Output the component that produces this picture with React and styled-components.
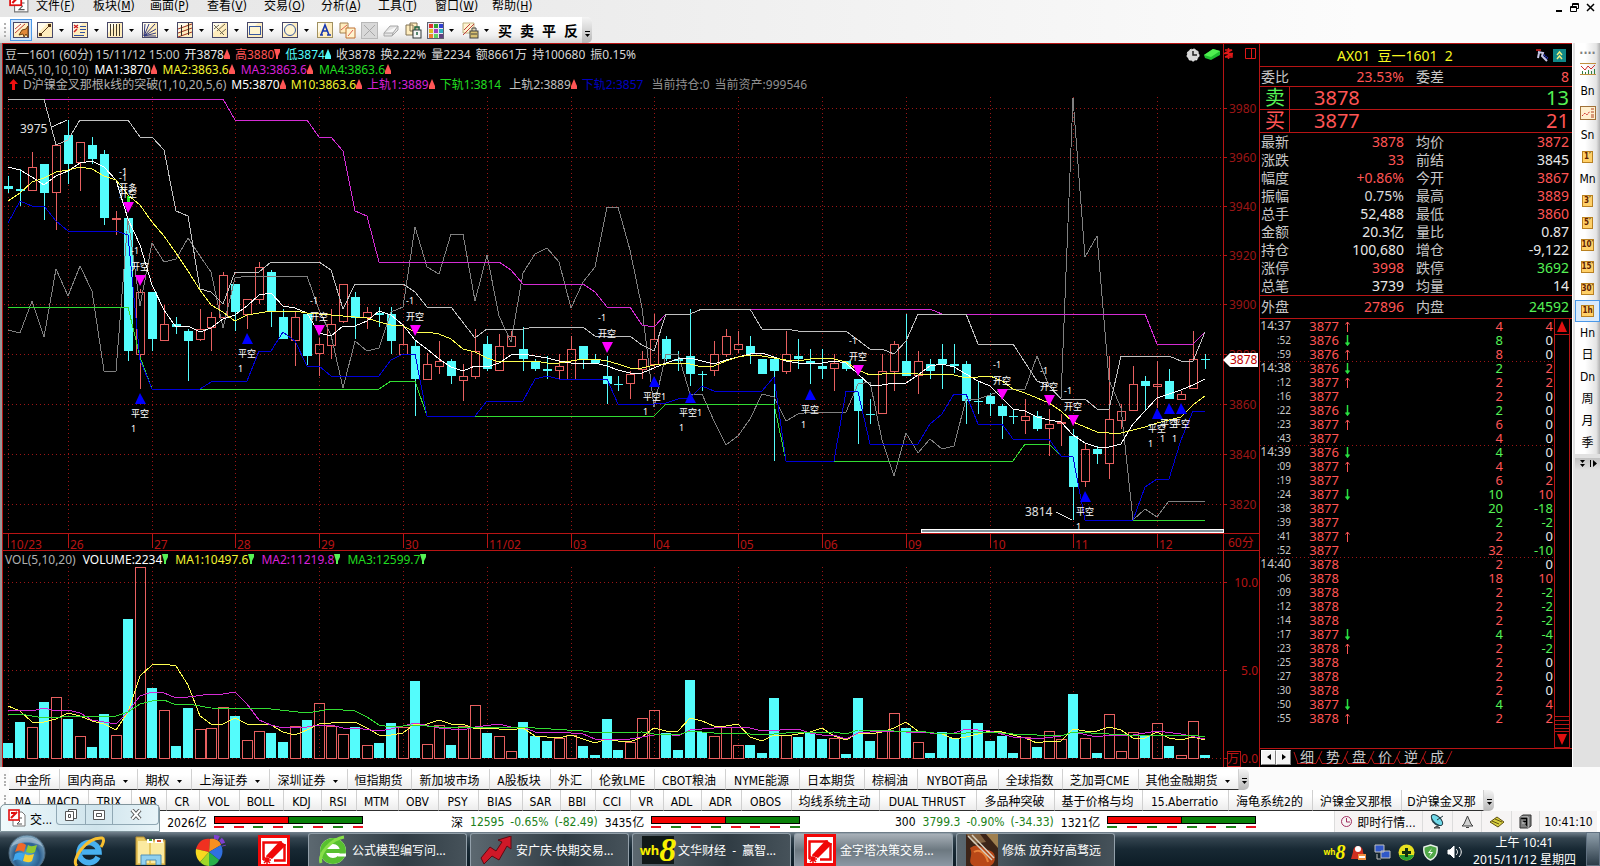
import styled, { createGlobalStyle } from 'styled-components';

const red = '#ff5555';
const green = '#55f255';
const cyan = '#54fcfc';
const silver = '#c8c8c8';
const line = '#b81414';
const dim = '#9c1616';

const uiFont = `"Noto Sans", "Noto Sans CJK SC", sans-serif`;
const barFont = `"DejaVu Sans Condensed", "Noto Sans CJK SC", sans-serif`;

// ---------- data ----------

// kind, high, top, bottom, low, top of the volume bar
const candles = `
c 176 186 189 193 743|c 169 189 191 206 722|r 152 167 190 190 727|c 164 164 193 220 702|r 145 145 192 230 697
c 120 135 164 184 719|r 142 142 162 191 736|c 137 145 159 164 747|c 150 154 218 225 714|r 211 218 219 235 735
c 218 218 351 361 619|r 289 292 354 389 567|c 292 292 339 351 688|r 305 324 340 340 710|c 317 324 327 334 746
c 329 331 341 381 708|r 309 329 339 341 729|r 312 317 327 351 728|r 272 275 317 317 707|c 284 284 312 331 716
r 299 299 314 329 740|r 262 267 299 304 731|c 270 272 311 327 733|c 309 317 339 339 742|r 311 317 340 366 726
c 314 314 356 365 720|r 338 344 353 376 703|r 309 324 345 359 726|r 284 284 321 323 734|c 292 297 318 339 727
r 307 312 317 329 745|c 307 313 315 327 743|c 307 314 341 354 723|r 324 344 354 354 727|c 340 346 379 416 681
r 353 364 379 379 744|r 341 361 366 374 725|c 359 361 376 384 745|r 364 376 380 401 726|r 329 351 376 379 705
c 336 344 369 371 733|r 334 346 370 370 736|r 331 336 346 346 751|c 327 349 359 371 722|c 359 361 369 371 736
c 356 369 371 379 741|r 354 366 370 379 738|r 336 349 379 379 735|c 346 346 359 369 746|c 354 359 363 363 755
c 356 376 384 404 719|c 376 384 385 391 750|r 371 374 383 399 742|r 351 359 369 379 718|r 314 339 364 367 710
c 336 339 359 361 733|c 351 359 361 371 750|c 309 356 374 386 680|c 371 374 375 391 732|r 341 354 370 376 736
r 329 336 354 357 727|r 331 344 349 353 745|c 336 346 354 364 745|c 359 359 374 374 753|c 359 359 371 461 698
r 331 354 371 374 735|c 339 356 359 369 737|c 349 361 364 384 733|c 349 366 369 379 739|r 354 363 368 391 738
c 361 361 369 371 754|c 379 379 411 444 698|c 399 414 415 424 741|r 354 371 413 413 731|r 341 344 371 391 713
c 314 361 376 376 728|r 351 361 375 394 742|c 359 364 371 379 753|c 344 359 364 389 732|c 344 364 366 373 738
c 361 364 401 424 720|c 381 401 402 414 723|c 393 396 404 416 741|c 404 406 416 439 736|c 409 416 417 424 753
r 399 416 420 434 737|c 411 416 429 431 747|r 409 424 428 456 731|r 414 422 423 446 739|c 429 436 487 520 694
r 444 449 481 487 738|c 446 449 454 464 753|r 356 419 463 479 714|r 404 411 420 429 751|r 366 384 410 410 732
c 376 381 386 411 736|r 361 384 386 408 723|c 369 381 399 399 746|r 391 394 399 399 755|r 331 359 388 388 721
c 354 359 360 369 755`.trim().split(/[\n|]/).map(row => {
    const [kind, ...n] = row.split(' ');
    const [high, top, bottom, low, vol] = n.map(Number);
    return { kind, high, top, bottom, low, vol };
});

const barX = i => Math.round(8 + 11.97 * i);

// one value for each bar
const every = text => text.split(' ').map((y, i) => `${barX(i)},${y}`).join(' ');
// "bar:y" pairs
const pairs = text => text.split(' ').map(p => {
    const [i, y] = p.split(':');
    return `${barX(Number(i))},${y}`;
}).join(' ');

const priceLines = [
    { color: '#808080', points: pairs('0:330 1:333 2:301 3:337 4:269 5:296 6:266 7:291 8:371 9:371 10:218 11:306 12:243 13:262 14:259 15:238 16:256 17:272 18:328 19:278 20:276 25:276 26:310 27:335 28:388 29:341 30:351 31:348 32:312 33:307 34:227 35:267 36:274 37:234 38:234 39:301 40:255 41:316 42:342 43:273 44:254 45:248 46:262 47:308 48:282 49:267 50:207 51:207 52:250 53:308 54:407 55:354 56:354 57:394 58:394 59:421 60:445 61:436 62:419 63:394 64:397 65:421 66:414 67:412 70:412 71:384 72:382 73:440 74:476 75:433 76:453 77:439 78:449 79:446 80:399 81:399 82:395 83:390 84:389 85:389 86:356 87:386 88:398 89:98 90:257 91:236 92:380 93:408 94:520 95:509 96:517 97:501 100:501') },
    { color: '#32dc32', points: pairs('0:307 10:307 11:357 12:389 31:389 32:381 34:381 35:416 54:416 55:404 64:404 65:461 84:461 85:444 87:444 88:456 89:457 90:520 100:520') },
    { color: '#0000d8', points: pairs('0:223 1:201 2:206 3:206 4:221 5:231 9:231 10:235 11:360 12:389 16:389 17:382 20:381 21:351 22:351 23:332 24:341 25:366 26:366 27:376 31:376 32:360 33:354 34:354 35:416 39:416 40:401 43:401 44:379 45:376 46:379 50:379 51:404 54:404 55:403 56:399 57:398 58:386 59:391 63:391 64:377 65:461 69:461 70:391 71:392 72:444 76:444 77:424 78:414 79:394 80:394 81:424 83:424 84:439 87:439 88:456 89:457 90:520 94:520 95:487 96:479 97:479 98:440 99:411 100:411') },
    { color: '#d42cd4', points: pairs('3:99 18:99 19:120 25:120 26:137 27:137 28:151 29:211 30:216 31:262 41:262 42:270 43:284 48:284 49:292 50:307 52:307 53:325 54:327 55:314 57:314 58:309 77:309 78:314 95:314 96:344 99:344 100:332') },
    { color: '#c0c0c0', points: pairs('0:99 3:99 4:145 5:140 6:120 10:120 11:137 12:137 13:150 14:211 15:216 16:289 17:292 18:304 19:272 21:272 22:262 26:262 27:270 28:309 29:284 33:284 34:292 35:307 37:307 39:338 40:329 43:329 44:327 48:327 49:336 52:336 53:345 54:351 55:314 57:314 58:309 62:309 63:329 65:329 66:331 70:331 71:340 72:349 73:349 74:354 75:341 76:314 80:314 81:344 84:344 86:381 87:386 88:399 90:399 91:409 92:409 93:356 97:356 98:361 99:361 100:332') },
    { color: '#ffffff', points: every('167 170 177 185 176 171 163 161 167 180 219 245 285 310 327 326 332 328 319 315 306 295 293 306 308 313 333 336 326 326 321 311 315 325 340 349 359 367 371 366 367 363 355 354 356 358 361 363 363 363 366 370 373 373 368 363 359 358 361 364 360 357 354 353 357 361 363 364 363 361 363 374 385 385 383 383 375 366 364 367 374 381 386 398 409 411 417 420 422 435 443 447 447 444 424 411 398 394 390 385 379') },
    { color: '#ffff50', points: every('201 193 182 178 172 170 167 169 176 180 195 205 222 236 253 271 290 305 312 321 315 313 311 311 311 313 314 315 316 317 318 322 325 326 332 332 334 339 349 352 358 362 361 361 361 363 363 361 359 359 361 364 368 368 365 364 363 364 367 366 361 357 355 356 358 360 361 359 358 359 362 370 375 374 373 373 374 375 374 375 378 377 376 381 389 393 398 403 411 422 427 432 433 433 430 427 423 420 417 405 396') },
];

const volumeLines = [
    { color: '#ffff50', points: every('706 711 722 722 719 713 716 721 724 730 712 676 665 664 666 685 716 724 724 718 724 724 725 732 735 730 724 723 722 722 728 735 735 733 724 724 720 724 724 729 728 729 730 728 736 737 738 735 739 743 739 741 742 737 728 731 731 718 721 726 726 724 737 741 735 736 734 732 728 736 740 733 734 732 728 722 731 733 734 739 737 734 731 732 735 738 743 741 741 729 731 731 727 730 738 738 732 738 740 737 740') },
    { color: '#d42cd4', points: pairs('0:710 2:711 3:708 4:711 5:710 6:713 7:720 8:722 9:724 10:712 11:696 12:692 13:693 14:698 15:697 17:694 18:694 19:692 20:704 21:720 22:725 23:728 24:727 25:727 26:725 27:725 28:728 29:728 31:731 32:729 34:723 36:728 38:730 39:727 41:724 42:727 43:727 44:732 47:733 48:734 49:739 52:739 54:735 55:734 56:736 57:730 59:728 61:727 62:728 63:731 66:729 67:733 68:735 69:735 70:739 71:733 73:731 75:732 77:733 79:733 80:729 82:731 84:737 86:739 88:736 89:732 91:737 92:735 94:735 96:731 98:734 100:739') },
    { color: '#32dc32', points: pairs('0:715 1:714 3:718 6:716 9:716 10:712 11:704 12:701 13:700 14:705 15:704 17:708 22:709 25:713 27:709 29:711 30:717 31:725 32:727 34:725 36:727 40:727 44:728 48:731 49:733 53:732 54:734 56:735 57:731 59:733 61:733 63:735 65:733 69:732 70:734 71:730 74:731 76:731 78:734 82:732 84:734 88:736 89:732 92:734 95:736 97:735 99:735 100:737') },
];

const days = [[0, '10/23'], [5, '26'], [12, '27'], [19, '28'], [26, '29'], [33, '30'], [40, '11/02'], [47, '03'],
    [54, '04'], [61, '05'], [68, '06'], [75, '09'], [82, '10'], [89, '11'], [96, '12']];
const prices = [[3980, 108], [3960, 157], [3940, 206], [3920, 255], [3900, 304], [3880, 354], [3860, 404], [3840, 454], [3820, 504]];
const sells = [[10, 202], [11, 275], [26, 325], [34, 325], [50, 342], [71, 365], [83, 389], [87, 395], [89, 415]];
const buys = [[11, 393], [20, 333], [54, 376, '平空1'], [57, 392, '平空1'], [67, 389], [90, 491], [96, 408], [97, 403], [98, 403]];

const quotes = [
    ['最新', '3878', red, '均价', '3872', red],
    ['涨跌', '33', red, '前结', '3845', '#e8e8e8'],
    ['幅度', '+0.86%', red, '今开', '3867', red],
    ['振幅', '0.75%', '#d8d8d8', '最高', '3889', red],
    ['总手', '52,488', '#e8e8e8', '最低', '3860', red],
    ['金额', '20.3亿', '#e8e8e8', '量比', '0.87', '#e8e8e8'],
    ['持仓', '100,680', '#e8e8e8', '增仓', '-9,122', '#e8e8e8'],
    ['涨停', '3998', red, '跌停', '3692', green],
    ['总笔', '3739', '#e8e8e8', '均量', '14', '#e8e8e8'],
];

// time, price, arrow, volume, volume side, change
const ticks = `14:37 3877 u 4 r 4|:52 3876 d 8 g 0|:59 3876 u 8 r 0|14:38 3876 d 2 g 2|:12 3877 u 2 r 2
:16 3877 - 2 r 0|:22 3876 d 2 g 0|:23 3877 u 6 r 0|:43 3877 - 4 r 0|14:39 3876 d 4 g 0
:09 3877 u 4 r 0|:19 3877 - 6 r 2|:24 3877 d 10 g 10|:38 3877 - 20 g -18|:39 3877 - 2 g -2
:41 3877 u 2 r 0|:52 3877 - 32 r -10|14:40 3878 - 2 r 0|:06 3878 - 18 r 10|:09 3878 - 2 r -2
:12 3878 - 2 r -2|:14 3878 - 2 r -2|:17 3877 d 4 g -4|:23 3878 u 2 r -2|:25 3878 - 2 r 0
:27 3878 - 2 r 0|:30 3878 - 2 r 0|:50 3877 d 4 g 4|:55 3878 u 2 r 2`.split(/[\n|]/).map(t => t.split(' '));

const menus = [['文件', 'F'], ['板块', 'M'], ['画面', 'P'], ['查看', 'V'], ['交易', 'O'], ['分析', 'A'], ['工具', 'T'], ['窗口', 'W'], ['帮助', 'H']];

const markets = [['中金所', 51], ['国内商品', 78, true], ['期权', 54, true], ['上海证券', 78, true], ['深圳证券', 78, true],
    ['恒指期货', 64], ['新加坡市场', 78], ['A股板块', 61], ['外汇', 41], ['伦敦LME', 63], ['CBOT粮油', 71], ['NYME能源', 74],
    ['日本期货', 65], ['棕榈油', 53], ['NYBOT商品', 81], ['全球指数', 64], ['芝加哥CME', 76], ['其他金融期货', 100, true]];
const indicators = [['MA', 31], ['MACD', 49], ['TRIX', 43], ['WR', 35], ['CR', 33], ['VOL', 40], ['BOLL', 44], ['KDJ', 38],
    ['RSI', 35], ['MTM', 42], ['OBV', 40], ['PSY', 40], ['BIAS', 44], ['SAR', 38], ['BBI', 35], ['CCI', 35], ['VR', 33],
    ['ADL', 38], ['ADR', 40], ['OBOS', 50], ['均线系统主动', 88], ['DUAL THRUST', 97], ['多品种突破', 78],
    ['基于价格与均', 88], ['15.Aberratio', 86], ['海龟系统2的', 84], ['沪镍金叉那根', 89], ['D沪镍金叉那', 82]];

// ---------- small drawings ----------

const Mark = ({ up, color = red }) => (
    <svg width="6" height="11" viewBox="0 0 6 11">
        <path d={up ? 'M3 0L6 7V10H0V7Z' : 'M0 0H6V3L4 7V10H2V7Z'} fill={color} />
    </svg>
);

const Logo = ({ size }) => (
    <svg width={size} height={size} viewBox="0 0 32 32">
        <rect width="32" height="32" fill="#f00808" />
        <rect x="3" y="3" width="26" height="26" fill="#fff" />
        <path d="M5.500 25V7.500H24" fill="none" stroke="#f00808" strokeWidth="2.500" />
        <path d="M26.500 9V25.500H16" fill="none" stroke="#f00808" strokeWidth="2.500" />
        <path d="M8 21L22 6L28 10L14 24Z" fill="#f00808" />
        <path d="M6 22L12 28M12 22L6 28M9 21V29M5 25H13" stroke="#f00808" strokeWidth="1.5" />
    </svg>
);

const Page = ({ size = 18 }) => (
    <svg width={size} height={size} viewBox="0 0 18 18">
        <path d="M5 3H14L17 6V17H5Z" fill="#fff" stroke="#777" />
        <path d="M9 9H14M9 9L12 12L9 15H14" fill="none" stroke="#555" />
        <rect x="1" y="1" width="10" height="10" fill="#fff" stroke="#e01010" strokeWidth="1.6" />
        <path d="M3 9L9 3M3 4H7" stroke="#e01010" strokeWidth="2" />
    </svg>
);

const Tile = ({ edge = '#484868', children }) => (
    <svg width="16" height="16" viewBox="0 0 16 16" fill="none" stroke="#604020">
        <rect x="0.5" y="0.5" width="15" height="15" fill="#ffedbe" stroke={edge} />
        <path d="M1 1H11L1 11Z" fill="#fffbea" stroke="none" />
        {children}
    </svg>
);

const SmallIcon = ({ children }) => (
    <svg width="17" height="17" viewBox="0 0 17 17" fill="none">{children}</svg>
);

const tools = [
    { label: '画线', active: true, icon: <Tile><path d="M2 7L8 2M2 11L12 2" stroke="#c04040" /><path d="M6 13L9 8L13 7L15 4L15 15L13 12L11 15L10 12Z" fill="#e08838" stroke="#704010" /></Tile> },
    { label: '线段', drop: true, icon: <Tile><path d="M4 12L12 4" /><path d="M2 11H5V14H2ZM11 2H14V5H11Z" fill="#503010" stroke="none" /></Tile> },
    { label: '文字线', drop: true, icon: <Tile><path d="M8 4.5H14M8 7.5H14M8 10.5H13M2 13.5H12" stroke="#3050a0" /><path d="M2 3L6 6M6 3L2 6M2 10L5 7" stroke="#d02020" strokeWidth="1.5" /></Tile> },
    { label: '周期线', drop: true, icon: <Tile><path d="M3.5 2V14M6.5 2V14M9.5 2V14M12.5 2V14" stroke="#403828" /></Tile> },
    { label: '扇形线', drop: true, icon: <Tile><path d="M2 14L3 2M2 14L7 2M2 14L13 2M2 14L14 7M2 14L14 11M2 14H14" stroke="#303880" /></Tile> },
    { label: '通道线', drop: true, icon: <Tile><path d="M1 7L15 2M1 11L15 6M1 15L15 10" stroke="#a03020" /><path d="M4.5 3V14M11.5 1V13" stroke="#302820" /></Tile> },
    { label: '平行线', drop: true, icon: <Tile><path d="M2 3L12 13M5 9L13 2M8 12L14 7M2 7L7 3" stroke="#706850" /></Tile> },
    { label: '矩形', drop: true, icon: <Tile><rect x="2.5" y="4.5" width="11" height="8" stroke="#3858a0" fill="#fff4d0" /></Tile> },
    { label: '圆形', drop: true, icon: <Tile><circle cx="8" cy="8" r="5.5" stroke="#3858a0" fill="#fff4d0" /></Tile> },
    { label: '文字', icon: <Tile edge="#a09060"><path d="M4 13L8 3L12 13M6 9H11M3 13H6M10 13H14" stroke="#1838b0" strokeWidth="1.6" /></Tile> },
    { label: '复制', icon: <SmallIcon><path d="M1 1H9V11H1Z" fill="#ffedbe" stroke="#a08050" /><path d="M7 6H16V16H7Z" fill="#fff4d0" stroke="#c07030" /><path d="M2 8L8 3M9 14L14 8" stroke="#e06050" /></SmallIcon> },
    { label: '删除', icon: <SmallIcon><rect x="0.5" y="0.5" width="16" height="16" fill="#d8d8d8" stroke="#b8b8b8" /><path d="M3 3L14 14M14 3L3 14" stroke="#a8a8a8" /></SmallIcon> },
    { label: '橡皮', icon: <SmallIcon><path d="M1 11L7 4H15L10 11ZM1 11V14H9L15 8V4M10 11L9 14" fill="#e4e4e4" stroke="#a8a8a8" /></SmallIcon> },
    { label: '锁定', icon: <SmallIcon><path d="M1 3H8V13H1ZM5 1H12V9H5Z" fill="#ffedbe" stroke="#807050" /><rect x="8" y="8" width="8" height="8" fill="#f4f4f4" stroke="#303838" /><path d="M10 8V5H14V8M12 10V13" stroke="#206040" strokeWidth="1.5" /></SmallIcon> },
    { label: '颜色', drop: true, icon: <SmallIcon><rect x="0.5" y="0.5" width="16" height="16" fill="#e8e8f0" stroke="#606070" />
        {['#e03030', '#30a030', '#3040d0', '#e0c020', '#a040c0', '#30b0c0', '#f08030', '#60d060', '#604080'].map((c, i) => (
            <rect key={c} x={2 + (i % 3) * 5} y={2 + Math.floor(i / 3) * 5} width="4" height="4" fill={c} />))}</SmallIcon> },
    { label: '锁线', drop: true, icon: <SmallIcon><path d="M1 1H12V11H1Z" fill="#fff4d0" stroke="#c0b080" /><path d="M1 13L12 2M2 8L8 2" stroke="#c04040" /><rect x="8" y="9" width="8" height="7" fill="#d8c070" stroke="#404040" /><path d="M10 9V6H14V9M9 12H15" stroke="#404040" /></SmallIcon> },
];

// ---------- charts ----------

const Grid = ({ top, bottom, rows }) => (
    <g stroke={dim} strokeDasharray="1 3">
        {days.map(([i]) => <path key={i} d={`M${barX(i)} ${top}V${bottom}`} />)}
        {rows.map(y => <path key={y} d={`M4 ${y}H1223`} />)}
    </g>
);

const PriceChart = () => (
    <Drawing viewBox="3 92 1256 458" role="img" aria-label="K线图">
        <g shapeRendering="crispEdges" fill="none">
            <Grid top={97} bottom={533} rows={prices.map(p => p[1])} />
            {candles.map((c, i) => {
                const x = barX(i);
                return c.kind === 'c' ? (
                    <g key={i} fill={cyan} stroke={cyan}>
                        <path d={`M${x} ${c.high}V${c.low}`} />
                        <rect x={x - 4} y={c.top} width="9" height={c.bottom - c.top} stroke="none" />
                    </g>
                ) : (
                    <g key={i} stroke="#e86060">
                        <path d={`M${x} ${c.high}V${c.top}M${x} ${c.bottom}V${c.low}`} />
                        <rect x={x - 4} y={c.top} width="8" height={c.bottom - c.top} />
                    </g>
                );
            })}
            {priceLines.map(l => <polyline key={l.color} points={l.points} stroke={l.color} />)}
            <path d="M3 533H1259M1223 92V550" stroke={line} />
            {days.map(([i]) => <path key={i} d={`M${barX(i)} 533V548`} stroke={line} />)}
            {prices.map(([p, y]) => <path key={p} d={`M1223 ${y}H1227`} stroke={line} />)}
            <path d="M52 127L67 120M1056 512L1072 520" stroke="#e0e0e0" />
            <rect x="921" y="529" width="302" height="3" fill="#809098" stroke="#fff" />
            <rect x="127" y="196" width="3" height="6" fill="#20f020" />
        </g>
        <g fill="#fff" fontSize="9">
            {sells.map(([i, y]) => (
                <g key={i}>
                    <path d={`M${barX(i) - 5} ${y}H${barX(i) + 6}L${barX(i)} ${y + 11}Z`} fill="#ff00ff" />
                    <text x={barX(i) - 9} y={y - 5}>开空</text>
                    <text x={barX(i) - 9} y={y - 21}>-1</text>
                </g>
            ))}
            <text x="119" y="191">开多</text>
            <text x="119" y="175">-1</text>
            {buys.map(([i, y, text = '平空']) => (
                <g key={i}>
                    <path d={`M${barX(i) - 5} ${y + 11}H${barX(i) + 6}L${barX(i)} ${y}Z`} fill="#0000ff" />
                    <text x={barX(i) - (text === '平空' ? 9 : 11)} y={y + 24}>{text}</text>
                    <text x={barX(i) - (text === '平空' ? 9 : 11)} y={y + 39}>1</text>
                </g>
            ))}
        </g>
        <g fill={line} fontSize="12">
            {days.map(([i, text]) => <text key={i} x={barX(i) + 2} y="549">{text}</text>)}
            {prices.map(([p, y]) => <text key={p} x="1229" y={y + 5} fill={dim}>{p}</text>)}
            <text x="1228" y="547">60分</text>
            <text x="20" y="133" fill="#e0e0e0">3975</text>
            <text x="1025" y="516" fill="#e0e0e0">3814</text>
            <path d="M1223 360L1230 353H1258V367H1230Z" fill="#fff" />
            <text x="1230" y="364" fill="#c00000">3878</text>
        </g>
    </Drawing>
);

const VolumeChart = () => (
    <Drawing viewBox="3 567 1256 200" role="img" aria-label="成交量">
        <g shapeRendering="crispEdges" fill="none">
            <Grid top={567} bottom={758} rows={[582, 670, 758]} />
            {candles.map((c, i) => (
                <rect key={i} x={barX(i) - 5} y={c.vol} width="10" height={758 - c.vol}
                    fill={c.kind === 'c' ? cyan : 'none'}
                    stroke={c.kind === 'c' ? 'none' : '#e86060'} />
            ))}
            {volumeLines.map(l => <polyline key={l.color} points={l.points} stroke={l.color} />)}
            <path d="M1223 567V767M1223 582H1227M1223 670H1227M1223 758H1227" stroke={line} />
            <rect x="1227" y="751" width="13" height="15" stroke={line} />
        </g>
        <g fill={line} fontSize="12" textAnchor="end">
            <text x="1258" y="587">10.0</text>
            <text x="1258" y="675">5.0</text>
            <text x="1258" y="763">0.0</text>
            <text x="1239" y="763">万</text>
        </g>
    </Drawing>
);

const ChartArea = () => (
    <ChartPanel>
        <Legends>
            <LegendBox>
                <Legend $gap={5}>
                    <Item $c={silver}>豆一1601 (60分) 15/11/12 15:00</Item>
                    <Item $c="#e8e8e8">开3878<Mark up /></Item>
                    <Item $c={red}>高3880<Mark /></Item>
                    <Item $c={cyan}>低3874<Mark up color={cyan} /></Item>
                    <Item $c="#d8d8d8">收3878</Item>
                    <Item $c="#d8d8d8">换2.22%</Item>
                    <Item $c="#d8d8d8">量2234</Item>
                    <Item $c="#d8d8d8">额8661万</Item>
                    <Item $c="#d8d8d8">持100680</Item>
                    <Item $c="#d8d8d8">振0.15%</Item>
                    <Corner>
                        <svg width="14" height="14" viewBox="0 0 14 14">
                            <circle cx="7" cy="7" r="6" fill="#d8d8d8" stroke="#fff" strokeDasharray="2 2" />
                            <path d="M7 3V7H11" fill="none" stroke="#202020" strokeWidth="1.5" />
                        </svg>
                        <svg width="17" height="13" viewBox="0 0 17 13">
                            <path d="M0 7L9 1L16 3V7L7 12L1 10Z" fill="#20c030" />
                            <path d="M0 7L9 1L16 3L7 9Z" fill="#50f050" />
                        </svg>
                    </Corner>
                </Legend>
                <Legend $gap={6}>
                    <Item $c="#b0b0b0">MA(5,10,10,10)</Item>
                    <Item $c="#fff">MA1:3870<Mark up /></Item>
                    <Item $c="#f4f430">MA2:3863.6<Mark up /></Item>
                    <Item $c="#d820d8">MA3:3863.6<Mark up /></Item>
                    <Item $c="#20dc20">MA4:3863.6<Mark up /></Item>
                </Legend>
                <Legend $gap={5} $indent>
                    <svg width="9" height="11" viewBox="0 0 9 11"><path d="M4.500 0L9 5H6V11H3V5H0Z" fill="#f01010" /></svg>
                    <Item $c="#b0b0b0">D沪镍金叉那根k线的突破(1,10,20,5,6)</Item>
                    <Item $c="#fff">M5:3870<Mark up /></Item>
                    <Item $c="#f4f430">M10:3863.6<Mark up /></Item>
                    <Item $c="#d820d8">上轨1:3889<Mark up /></Item>
                    <Item $c="#20dc20">下轨1:3814</Item>
                    <Item $c="#c0c0c0">&nbsp;上轨2:3889<Mark up /></Item>
                    <Item $c="#0000c0">下轨2:3857</Item>
                    <Item $c="#909090">&nbsp;当前持仓:0</Item>
                    <Item $c="#909090">当前资产:999546</Item>
                </Legend>
            </LegendBox>
            <Gutter>
                <svg width="9" height="11" viewBox="0 0 9 11" fill="none" stroke="#e01818" strokeWidth="1.5">
                    <path d="M4.500 0V11M1 2H8L1 5M0 5.500H9M1 9L8 6V9H1" />
                </svg>
                <svg width="11" height="11" viewBox="0 0 11 11" fill="none" stroke="#e01818">
                    <path d="M0.500 0.500H10.500V10.500H0.500ZM6.500 0V11" />
                </svg>
            </Gutter>
        </Legends>
        <PriceChart />
        <Legends $ruled>
            <LegendBox $ruled>
                <Legend $gap={7}>
                    <Item $c="#b0b0b0">VOL(5,10,20)</Item>
                    <Item $c="#fff">VOLUME:2234<Mark color={green} /></Item>
                    <Item $c="#f4f430">MA1:10497.6<Mark color={green} /></Item>
                    <Item $c="#d820d8">MA2:11219.8<Mark color={green} /></Item>
                    <Item $c="#20dc20">MA3:12599.7<Mark color={green} /></Item>
                </Legend>
            </LegendBox>
            <Gutter />
        </Legends>
        <VolumeChart />
    </ChartPanel>
);

// ---------- quote panel ----------

const QuoteRow = ({ row }) => (
    <tr>
        <Label>{row[0]}</Label>
        <Value $c={row[2]}>{row[1]}</Value>
        <Label $second>{row[3]}</Label>
        <Value $c={row[5]}>{row[4]}</Value>
    </tr>
);

const changeColor = v => (v === '0' ? '#e8e8e8' : v.startsWith('-') ? green : red);

const QuotePanel = () => (
    <Quote>
        <Title>
            <span>AX01&nbsp; 豆一1601&nbsp; 2</span>
            <TitleIcons>
                <svg width="14" height="13" viewBox="0 0 14 13" fill="none">
                    <path d="M1 1H6" stroke="#e02020" strokeWidth="1.5" />
                    <path d="M3 3L8 4L7 7L12 12M4 4L3 9" stroke="#c8c8e8" strokeWidth="2" />
                    <path d="M9 6L13 10" stroke="#3040e0" strokeDasharray="1 1" strokeWidth="2" />
                </svg>
                <svg width="13" height="13" viewBox="0 0 13 13">
                    <rect width="13" height="13" fill="#108888" />
                    <path d="M4 6L6.500 3L9 6M4 10L6.500 7L9 10" fill="none" stroke="#f0f080" strokeWidth="1.5" />
                </svg>
            </TitleIcons>
        </Title>
        <QuoteTable $h={20}><tbody><QuoteRow row={['委比', '23.53%', red, '委差', '8', red]} /></tbody></QuoteTable>
        <Side $c={green}><SideName>卖</SideName><SidePrice>3878</SidePrice>13</Side>
        <Side $c={red}><SideName>买</SideName><SidePrice>3877</SidePrice>21</Side>
        <QuoteTable $h={163}><tbody>{quotes.map(q => <QuoteRow key={q[0]} row={q} />)}</tbody></QuoteTable>
        <QuoteTable $h={23}><tbody><QuoteRow row={['外盘', '27896', red, '内盘', '24592', green]} /></tbody></QuoteTable>
        <TickArea>
            <TickTable>
                <colgroup><col width="31" /><col width="48" /><col width="14" /><col /><col width="50" /></colgroup>
                <tbody>
                    {ticks.map(([time, price, dir, vol, side, change], i) => (
                        <TickRow key={i} $first={i > 0 && time.length === 5}>
                            <TickTime $small={time.length < 5}>{time}</TickTime>
                            <Tick $c={red}>{price}</Tick>
                            <Tick>
                                {dir !== '-' && (
                                    <Arrow width="5" height="11" viewBox="0 0 5 11" fill="none">
                                        {dir === 'u'
                                            ? <path d="M2.500 11V1M0.500 3.500L2.500 1L4.500 3.500" stroke={red} />
                                            : <path d="M2.500 0V10M0.500 7.500L2.500 10L4.500 7.500" stroke="#28e040" strokeWidth="1.5" />}
                                    </Arrow>
                                )}
                            </Tick>
                            <Tick $c={side === 'g' ? green : red}>{vol}</Tick>
                            <Tick $c={changeColor(change)}>{change}</Tick>
                        </TickRow>
                    ))}
                </tbody>
            </TickTable>
            <Scroll>
                <ScrollButton aria-label="向上"><svg width="10" height="11"><path d="M5 0L10 11H0Z" fill="#e01010" /></svg></ScrollButton>
                <div>
                    <Thumb />
                    <ScrollButton aria-label="向下"><svg width="10" height="11"><path d="M0 0H10L5 11Z" fill="#e01010" /></svg></ScrollButton>
                </div>
            </Scroll>
        </TickArea>
        <Tabs>
            <PageButton aria-label="前"><svg width="4" height="6"><path d="M4 0V6L0 3Z" /></svg></PageButton>
            <PageButton aria-label="后"><svg width="4" height="6"><path d="M0 0V6L4 3Z" /></svg></PageButton>
            <TabEdge width="5" height="14" viewBox="0 0 5 14" fill="none" stroke={line}><path d="M1 2L5 13.500" /></TabEdge>
            {['细', '势', '盘', '价', '逆', '成'].map(t => (
                <Tab key={t}>
                    <span>{t}</span>
                    <svg width="9" height="14" viewBox="0 0 9 14" fill="none" stroke={line}>
                        <path d={t === '成' ? 'M0 13.500H2L8 1' : 'M0 13.500H2L8 1M5 7L8 13.500H9'} />
                    </svg>
                </Tab>
            ))}
        </Tabs>
    </Quote>
);

const SideBar = () => (
    <Rail>
        <RailTop>
            <Grip>····</Grip>
            <RailButton aria-label="走势">
                <svg width="16" height="12" viewBox="0 0 16 12" fill="none">
                    <path d="M0 0.500H16M0 11.500H16" stroke="#c09040" />
                    <path d="M1 3L5 7L8 3L11 6L15 2" stroke="#d03030" />
                    <path d="M2.500 11V8M5.500 11V9M8.500 11V7M11.500 11V8M14.500 11V6" stroke="#308040" />
                </svg>
            </RailButton>
            <RailButton>Bn</RailButton>
            <RailButton aria-label="分时">
                <svg width="16" height="14" viewBox="0 0 16 14" fill="none">
                    <rect x="0.5" y="0.5" width="15" height="13" fill="#fff0d0" stroke="#a07038" />
                    <path d="M2 10L5 7L7 9L10 5" stroke="#d03030" strokeDasharray="2 1" />
                    <path d="M11 3H14M11 6H14M11 9H14M11 11H14" stroke="#b04020" />
                </svg>
            </RailButton>
            <RailButton>Sn</RailButton>
            <RailButton><Period>1′</Period></RailButton>
            <RailButton>Mn</RailButton>
            {['3′', '5′', '10′', '15′', '30′'].map(p => <RailButton key={p}><Period>{p}</Period></RailButton>)}
            <RailButton $on><Period>1h</Period></RailButton>
            {['Hn', '日', 'Dn', '周', '月', '季'].map(p => <RailButton key={p}>{p}</RailButton>)}
        </RailTop>
        <RailEnd>
            <svg width="20" height="8" viewBox="0 0 20 8">
                <path d="M2 0H7L4.500 3ZM2 4H7L4.500 7ZM12 0H13V7H12ZM15 0L19 3.500L15 7Z" />
            </svg>
        </RailEnd>
    </Rail>
);

// ---------- bottom bars ----------

const DropArrow = () => <svg width="5" height="3"><path d="M0 0H5L2.500 3Z" fill="#000" /></svg>;

const Overflow = () => (
    <End><svg width="5" height="8"><path d="M0 0.500H5" stroke="#000" /><path d="M0 3H5L2.500 6Z" /></svg></End>
);

const LinkBar = ({ items, short }) => (
    <Bar $short={short}>
        <Dots />
        {items.map(([text, width, drop]) => (
            <BarButton key={text} $w={width}>{text}{drop && <DropArrow />}</BarButton>
        ))}
        <Overflow />
    </Bar>
);

const Meter = ({ dashes }) => (
    <MeterBox>
        <MeterBar><MeterRed /><MeterGreen /></MeterBar>
        <Dashes>{dashes.split('').map((d, i) => <Dash key={i} $c={d === 'r' ? '#e81020' : '#208018'} />)}</Dashes>
    </MeterBox>
);

const Status = () => (
    <StatusBar>
        <IndexGroup $w={451} $indent><Down>)</Down><span>2026亿</span><Meter dashes="rrgrgrgr" /></IndexGroup>
        <IndexGroup $w={444}>
            <span>深</span>
            <Down><span>12595</span><span>-0.65%</span><span>(-82.49)</span></Down>
            <span>3435亿</span>
            <Meter dashes="rgrgrrrg" />
        </IndexGroup>
        <IndexGroup $w={380}>
            <span>300</span>
            <Down><span>3799.3</span><span>-0.90%</span><span>(-34.33)</span></Down>
            <span>1321亿</span>
            <Meter dashes="grgrgrgr" />
        </IndexGroup>
        <StatusRight>
            <Cell $w={88}>
                <svg width="11" height="11" viewBox="0 0 11 11" fill="none" stroke="#a03060"><circle cx="5.5" cy="5.5" r="5" /><path d="M5.500 2V6H9" /></svg>
                即时行情...
            </Cell>
            <Cell $w={30}>
                <svg width="15" height="15" viewBox="0 0 15 15">
                    <path d="M7 12L10 14H4Z" fill="#808080" stroke="#404040" />
                    <path d="M2 1C0 7 5 13 12 11Z" fill="#30a8c8" stroke="#203840" />
                    <ellipse cx="7" cy="6" rx="7" ry="3.500" transform="rotate(43 7 6)" fill="#70d8e8" stroke="#203840" />
                    <path d="M7 6L13 2" stroke="#203840" />
                </svg>
            </Cell>
            <Cell $w={29}>
                <svg width="13" height="14" viewBox="0 0 13 14"><path d="M6.500 1L10 9L12 11H1L3 9Z" fill="#d0d0d0" stroke="#404040" /><path d="M5 12.500H8" stroke="#404040" /></svg>
            </Cell>
            <Cell $w={30}>
                <svg width="16" height="12" viewBox="0 0 16 12"><path d="M1 6L8 1L15 6L9 11Z" fill="#d8d040" stroke="#605010" /><path d="M3 5L10 8M6 3L13 6" stroke="#605010" /></svg>
            </Cell>
            <Cell $w={28}>
                <svg width="13" height="15" viewBox="0 0 13 15"><path d="M1 3L4 1H12V12L9 14H1Z" fill="#808080" stroke="#303030" /><path d="M1 3H9V14M3 6H7M3 9H7" stroke="#d0d0d0" /></svg>
            </Cell>
            <Cell $w={58}>10:41:10</Cell>
        </StatusRight>
    </StatusBar>
);

const MiniWindow = () => (
    <Mini>
        <Page />
        <span>交...</span>
        <MiniButtons>
            <MiniButton $w={28} aria-label="还原"><svg width="12" height="12" fill="#fff" stroke="#555"><path d="M3.500 0.500H11.500V9.500H3.500Z" /><path d="M0.500 2.500H8.500V11.500H0.500ZM3.500 5.500H5.500V8.500H3.500Z" /></svg></MiniButton>
            <MiniButton $w={27} aria-label="最大化"><svg width="12" height="10" fill="#fff" stroke="#555"><path d="M0.500 0.500H11.500V9.500H0.500ZM3.500 3.500H8.500V6.500H3.500Z" /></svg></MiniButton>
            <MiniButton $w={46} aria-label="关闭"><svg width="12" height="11" viewBox="0 0 12 11" fill="none"><path d="M2 1L10 10M10 1L2 10" stroke="#555" strokeWidth="4" /><path d="M2 1L10 10M10 1L2 10" stroke="#fff" strokeWidth="2" /></svg></MiniButton>
        </MiniButtons>
    </Mini>
);

const TaskBar = () => (
    <Task>
        <Launch $w={54} aria-label="开始">
            <svg width="38" height="34" viewBox="0 0 38 34">
                <defs>
                    <radialGradient id="orb" cx="0.5" cy="0.6" r="0.6">
                        <stop offset="0" stopColor="#58b8e8" /><stop offset="0.6" stopColor="#2c6090" /><stop offset="1" stopColor="#8cb0c4" />
                    </radialGradient>
                </defs>
                <circle cx="19" cy="20" r="18" fill="url(#orb)" stroke="#50687c" />
                <path d="M10 11C13 9 16 10 18 12L16 19C13 17 10 17 7 19Z" fill="#f06828" />
                <path d="M20 12C23 14 26 13 29 12L27 19C24 21 21 20 18 19Z" fill="#90c830" />
                <path d="M7 21C10 19 13 19 16 21L14 28C11 26 8 26 5 28Z" fill="#40a8f0" />
                <path d="M17 21C20 23 23 22 26 21L24 28C21 30 18 29 15 28Z" fill="#f8d030" />
                <path d="M3 14A18 18 0 0 1 35 14C28 8 10 8 3 14" fill="#fff" opacity="0.35" />
            </svg>
        </Launch>
        <Launch $w={70} aria-label="Internet Explorer">
            <svg width="34" height="32" viewBox="0 0 34 32" fill="none">
                <path d="M26 22A10 10 0 1 1 27 17H10" stroke="#48b0f0" strokeWidth="5.500" />
                <path d="M5 31C-2 26 14 2 30 3C33 4 31 9 29 12" stroke="#f8c030" strokeWidth="3" />
            </svg>
        </Launch>
        <Launch $w={54} aria-label="资源管理器">
            <svg width="32" height="30" viewBox="0 0 32 30">
                <path d="M1 2H9L11 5H30V30H1Z" fill="#e8c860" stroke="#b89030" />
                <path d="M3 6H14V28H3ZM16 7H29V28H16Z" fill="#fbeaa0" />
                <path d="M12 4H18V8H12ZM20 4H28V8H20Z" fill="#fff" /><path d="M14 4H17V6H14Z" fill="#40a040" /><path d="M22 5H26V7H22Z" fill="#d05030" />
                <path d="M6 20H26V30H21V25H11V30H6Z" fill="#90d0f0" stroke="#5090b8" />
            </svg>
        </Launch>
        <Launch $w={64} aria-label="浏览器">
            <svg width="32" height="32" viewBox="0 0 32 32">
                <path d="M15 17L2 14C4 7 9 3 16 4Z" fill="#f03020" />
                <path d="M15 17L16 4C21 3 26 6 27 10Z" fill="#f89020" />
                <path d="M15 17L2 14C1 19 3 24 6 27Z" fill="#f8d820" />
                <path d="M15 17L27 10C30 16 28 22 25 25Z" fill="#3070e0" />
                <path d="M15 17L6 27C9 30 12 31 15 31Z" fill="#a0d828" />
                <path d="M15 17L15 31C20 31 24 28 25 25Z" fill="#28b048" />
                <path d="M20 2C26 2 29 6 30 11" fill="none" stroke="#8040d0" strokeWidth="4" strokeDasharray="5 2" />
            </svg>
        </Launch>
        <Launch $w={64} aria-label="金字塔"><Logo size={32} /></Launch>
        <Window>
            <svg width="30" height="30" viewBox="0 0 30 30" fill="none">
                <circle cx="15" cy="16" r="13" fill="#fff" /><circle cx="15" cy="16" r="10" stroke="#58c030" strokeWidth="6" />
                <path d="M8 16H24" stroke="#58c030" strokeWidth="4" /><path d="M20 20H28" stroke="#fff" strokeWidth="3" />
                <path d="M3 28C0 18 14 4 26 2" stroke="#88e048" strokeWidth="3" />
            </svg>
            公式模型编写问...
        </Window>
        <Window>
            <svg width="32" height="28" viewBox="0 0 32 28"><path d="M1 22L10 11L16 15L22 6L18 4L31 0L31 13L27 10L19 24L12 20L4 28Z" fill="#d01828" stroke="#600810" /></svg>
            安广庆-快期交易...
        </Window>
        <Window>
            <Wh>wh<b>8</b></Wh>
            文华财经 &nbsp;-&nbsp; 赢智...
        </Window>
        <Window $active><Logo size={32} />金字塔决策交易...</Window>
        <Window>
            <svg width="32" height="32" viewBox="0 0 32 32">
                <rect width="32" height="32" fill="#3c2418" />
                <path d="M0 0H14L20 8L8 10Z" fill="#806040" />
                <path d="M4 14C12 8 16 14 22 16C32 18 30 30 24 32H8C0 28 8 22 4 14Z" fill="#b84818" />
                <path d="M8 18C14 14 20 20 22 28" fill="none" stroke="#e88038" strokeWidth="2" />
                <path d="M2 2L26 26M6 1L28 24" stroke="#d8d0c0" strokeWidth="1.5" />
                <path d="M20 0H32V14Z" fill="#a08050" />
            </svg>
            修炼 放弃好高骛远
        </Window>
        <Tray>
            <Wh $small>wh<b>8</b></Wh>
            <svg width="17" height="17" viewBox="0 0 17 17"><path d="M3 8C3 0 13 0 13 8L15 15H1Z" fill="#d03020" /><circle cx="8" cy="5" r="3" fill="#fff" /><path d="M8 10H16V16H8Z" fill="#f09040" /><path d="M9 13H15" stroke="#fff" strokeWidth="2" /></svg>
            <svg width="17" height="17" viewBox="0 0 17 17"><path d="M1 1H10V8H1ZM7 7H16V14H7Z" fill="#3058c8" stroke="#c0c0c0" /><path d="M3 10V15H7" fill="none" stroke="#c0c0c0" /></svg>
            <svg width="17" height="17" viewBox="0 0 17 17"><circle cx="8.5" cy="8.5" r="8" fill="#e8e020" /><path d="M1 11A8 8 0 0 0 16 11Z" fill="#28a030" /><path d="M8.500 4V13M4 8.500H13" stroke="#103010" strokeWidth="3" /></svg>
            <svg width="17" height="17" viewBox="0 0 17 17"><path d="M8.500 1L15 3C16 10 13 14 8.500 16C4 14 1 10 2 3Z" fill="#50a848" stroke="#e8f0e8" strokeWidth="1.500" /><path d="M10 4L6 9H9L7 13L11 8H8Z" fill="#fff" /></svg>
            <svg width="17" height="17" viewBox="0 0 17 17" fill="none" stroke="#fff"><path d="M2 6H4L8 2V14L4 10H2Z" fill="#fff" /><path d="M10 5C12 7 12 9 10 11M13 3C16 6 16 10 13 13" /></svg>
        </Tray>
        <Clock><span>上午 10:41</span><span>2015/11/12 星期四</span></Clock>
        <Desktop aria-label="显示桌面" />
    </Task>
);

const App = () => (
    <>
        <Global />
        <Screen>
            <TopArea>
                <MenuBar>
                    <Page size={20} />
                    {menus.map(([name, key]) => <MenuItem key={key}>{name}(<u>{key}</u>)</MenuItem>)}
                    <WindowButtons>
                        <IconButton aria-label="最小化"><svg width="8" height="9"><path d="M1 8H7" stroke="#000" strokeWidth="2" /></svg></IconButton>
                        <IconButton aria-label="还原"><svg width="9" height="9" fill="none" stroke="#000"><path d="M2.500 3V0.500H8.500V5.500H6M0.500 3.500H6.500V8.500H0.500ZM2 1.500H9M0 4.500H7" /></svg></IconButton>
                        <IconButton aria-label="关闭"><svg width="9" height="9"><path d="M1 1L8 8M8 1L1 8" stroke="#000" strokeWidth="1.500" /></svg></IconButton>
                    </WindowButtons>
                </MenuBar>
                <Toolbar>
                    <Dots />
                    {tools.map(t => (
                        <Tool key={t.label} $drop={t.drop} $active={t.active} aria-label={t.label}>
                            <span>{t.icon}</span>{t.drop && <DropArrow />}
                        </Tool>
                    ))}
                    {['买', '卖', '平', '反'].map(t => <Trade key={t}>{t}</Trade>)}
                    <Overflow />
                </Toolbar>
            </TopArea>
            <Main>
                <ChartArea />
                <QuotePanel />
                <SideBar />
            </Main>
            <Bottom>
                <LinkBar items={markets} />
                <LinkBar items={indicators} short />
                <Status />
                <MiniWindow />
            </Bottom>
            <TaskBar />
        </Screen>
    </>
);

export default App;

// ---------- styles ----------

const Global = createGlobalStyle`
    * { box-sizing: border-box; }
    body { margin: 0; background: #fff; overflow: hidden; }
    button {
        margin: 0;
        padding: 0;
        border: 0;
        background: none;
        color: inherit;
        font: inherit;
    }
    svg { flex: none; }
`;

const Screen = styled.div`
    display: flex;
    flex-direction: column;
    min-height: 100vh;
    font-family: ${uiFont};
    font-size: 12px;
    white-space: nowrap;
`;

const TopArea = styled.header`
    background: linear-gradient(90deg, #e6e6e6, #ececec 35%, #fcfcfc 85%);
`;

const MenuBar = styled.nav`
    display: flex;
    height: 17px;
    padding-left: 9px;
    overflow: hidden;
    font-family: ${barFont};
    > svg:first-child { margin-top: -7px; }
`;

const MenuItem = styled.button`
    width: 57px;
    height: 16px;
    margin-top: -2px;
    padding-left: 7px;
    line-height: 16px;
    text-align: left;
`;

const WindowButtons = styled.div`
    display: flex;
    gap: 7px;
    margin-left: auto;
    padding: 3px 5px 0 0;
`;

const IconButton = styled.button`
    display: flex;
    height: 9px;
`;

const Toolbar = styled.div`
    display: inline-flex;
    align-items: center;
    height: 26px;
    background: linear-gradient(#fff 30%, #f0f0f0 70%, #d4d4d4);
    border-radius: 0 6px 6px 0;
    vertical-align: top;
`;

const Dots = styled.span`
    width: 10px;
    height: 14px;
    border-left: 2px dotted #b0b0b0;
    margin-left: 4px;
    margin-right: -4px;
`;

const Tool = styled.button`
    display: flex;
    align-items: center;
    width: ${p => (p.$drop ? 35 : 22)}px;
    height: 22px;
    margin-right: ${p => (p.$active ? 2 : 0)}px;
    background: ${p => (p.$active ? '#d0e4fa' : 'none')};
    box-shadow: ${p => (p.$active ? 'inset 0 0 0 1px #4a98e8' : 'none')};
    span {
        display: flex;
        justify-content: center;
        width: 22px;
    }
    > svg { margin-left: 3px; }
`;

const Trade = styled.button`
    width: 22px;
    font-family: "Noto Sans CJK SC", sans-serif;
    font-size: 14px;
    font-weight: bold;
    line-height: 20px;
`;

const End = styled.span`
    display: flex;
    align-items: flex-end;
    justify-content: center;
    width: 10px;
    height: 100%;
    padding-bottom: 4px;
    background: linear-gradient(#f4f4f4, #b8b8b8);
    border-radius: 0 5px 5px 0;
`;

const Main = styled.main`
    display: flex;
    padding-left: 2px;
    background: #e1e1e1 linear-gradient(90deg, #989898 0 2px, transparent 2px);
`;

const ChartPanel = styled.section`
    flex: 1;
    min-width: 0;
    background: #000;
    border-top: 1px solid ${line};
    border-left: 1px solid ${line};
`;

const Drawing = styled.svg`
    display: block;
    width: 100%;
    font-family: ${uiFont};
`;

const Legends = styled.div`
    display: flex;
    border-top: ${p => (p.$ruled ? `1px solid ${line}` : 'none')};
`;

const LegendBox = styled.div`
    flex: 1;
    padding: ${p => (p.$ruled ? 1 : 3)}px 0 0 2px;
`;

const Legend = styled.div`
    display: flex;
    align-items: center;
    gap: ${p => p.$gap}px;
    height: 15px;
    line-height: 15px;
    padding-left: ${p => (p.$indent ? 4 : 0)}px;
`;

const Item = styled.span`
    display: inline-flex;
    align-items: center;
    color: ${p => p.$c};
`;

const Corner = styled.span`
    display: flex;
    align-items: center;
    gap: 4px;
    margin-left: auto;
    padding-right: 2px;
`;

const Gutter = styled.div`
    display: flex;
    gap: 12px;
    width: 36px;
    padding-top: 4px;
    border-left: 1px solid ${line};
`;

const Quote = styled.section`
    display: flex;
    flex-direction: column;
    width: 313px;
    background: #000;
    border-top: 1px solid ${line};
    border-left: 1px solid ${line};
    color: ${silver};
    font-size: 14px;
`;

const Title = styled.div`
    display: flex;
    align-items: center;
    height: 23px;
    padding-left: 77px;
    border-bottom: 1px solid ${line};
    color: #f8f820;
`;

const TitleIcons = styled.span`
    display: flex;
    gap: 4px;
    margin-left: auto;
    padding-right: 6px;
`;

const QuoteTable = styled.table`
    width: 100%;
    height: ${p => p.$h}px;
    border-bottom: 1px solid ${line};
    border-spacing: 0;
    table-layout: fixed;
`;

const Label = styled.th`
    width: ${p => (p.$second ? 48 : 46)}px;
    padding: 0 0 0 ${p => (p.$second ? 9 : 1)}px;
    font-weight: normal;
    line-height: 16px;
    text-align: left;
`;

const Value = styled.td`
    padding: 0 3px 0 0;
    color: ${p => p.$c};
    line-height: 16px;
    text-align: right;
    &:nth-child(2) { width: 101px; }
`;

const Side = styled.div`
    display: flex;
    align-items: center;
    height: 23px;
    padding-right: 3px;
    border-bottom: 1px solid ${line};
    color: ${p => p.$c};
    font-size: 20px;
    line-height: 22px;
`;

const SideName = styled.span`
    width: 30px;
    height: 100%;
    padding-left: 5px;
    border-right: 1px solid ${line};
`;

const SidePrice = styled.span`
    flex: 1;
    padding-left: 24px;
    color: ${red};
`;

const TickArea = styled.div`
    display: flex;
    flex: 1;
    align-items: flex-start;
    border-bottom: 1px solid ${line};
`;

const TickTable = styled.table`
    flex: 1;
    border-spacing: 0;
    table-layout: fixed;
    font-size: 13px;
`;

const TickRow = styled.tr`
    height: 14px;
    background: ${p => (p.$first ? `repeating-linear-gradient(90deg, ${dim} 0 1px, transparent 1px 4px) top / 100% 1px no-repeat` : 'none')};
`;

const Tick = styled.td`
    padding: 0;
    color: ${p => p.$c};
    line-height: 14px;
    text-align: right;
`;

const TickTime = styled(Tick)`
    color: ${silver};
    font-size: ${p => (p.$small ? 10 : 12)}px;
`;

const Arrow = styled.svg`
    display: block;
    margin-left: 6px;
`;

const Scroll = styled.div`
    display: flex;
    flex-direction: column;
    align-self: stretch;
    justify-content: space-between;
    width: 16px;
    margin: 0 2px 0 1px;
    border: 1px solid ${line};
    border-width: 0 1px;
`;

const ScrollButton = styled.button`
    display: flex;
    align-items: center;
    justify-content: center;
    width: 100%;
    height: 16px;
    border-bottom: 1px solid ${line};
`;

const Thumb = styled.div`
    height: 16px;
    border-bottom: 1px solid ${line};
    background: repeating-linear-gradient(${line} 0 1px, transparent 1px 4px);
`;

const Tabs = styled.div`
    display: flex;
    align-items: center;
    height: 18px;
    padding: 0 0 2px 1px;
`;

const TabEdge = styled.svg`
    margin: 0 -1px 0 2px;
`;

const PageButton = styled.button`
    display: flex;
    align-items: center;
    justify-content: center;
    width: 15px;
    height: 15px;
    background: #f4f4f4;
    border: 1px solid #808080;
    border-top-color: #fff;
    border-left-color: #fff;
`;

const Tab = styled.button`
    display: flex;
    width: 26px;
    height: 14px;
    span {
        flex: 1;
        border-bottom: 1px solid ${line};
        line-height: 13px;
        text-align: right;
    }
`;

const Rail = styled.aside`
    width: 28px;
    padding-left: 2px;
    border-left: 1px solid #fff;
`;

const RailTop = styled.div`
    display: flex;
    flex-direction: column;
    background: linear-gradient(90deg, #fff 40%, #e4e4e4 85%, #b0b0b0);
    font-family: ${barFont};
    font-size: 12px;
`;

const Grip = styled.span`
    height: 15px;
    color: #808080;
    font-weight: bold;
    line-height: 20px;
    text-align: center;
`;

const RailButton = styled.button`
    display: flex;
    align-items: center;
    justify-content: center;
    height: 22px;
    background: ${p => (p.$on ? '#d8eafc' : 'none')};
    box-shadow: ${p => (p.$on ? 'inset 0 0 0 1px #4a98e8' : 'none')};
    line-height: 20px;
`;

const Period = styled.span`
    min-width: 11px;
    height: 12px;
    background: #ffd068;
    border: 1px solid #b88020;
    color: #602000;
    font-size: 8px;
    font-weight: bold;
    line-height: 10px;
`;

const RailEnd = styled.div`
    display: flex;
    align-items: center;
    justify-content: center;
    height: 12px;
    margin-top: 4px;
    background: linear-gradient(#c0c0c0, #e0e0e0);
`;

const Bottom = styled.section`
    position: relative;
    display: flex;
    flex: 1;
    flex-direction: column;
    background: #fbfbfb;
    font-family: ${barFont};
`;

const Bar = styled.div`
    display: flex;
    height: ${p => (p.$short ? 21 : 23)}px;
    padding-top: ${p => (p.$short ? 0 : 2)}px;
    ${Dots} {
        width: 9px;
        height: 12px;
        margin: 5px -4px 0 4px;
    }
`;

const BarButton = styled.button`
    display: flex;
    align-items: center;
    justify-content: center;
    gap: 7px;
    width: ${p => p.$w}px;
    padding: 4px 2px 0 0;
    background: linear-gradient(#fff 30%, #ececec);
    border-right: 1px solid #d0d0d0;
    border-bottom: 1px solid #303030;
    line-height: 16px;
`;

const StatusBar = styled.footer`
    display: flex;
    flex: 1;
    align-items: center;
    height: 21px;
    background: #fff;
`;

const IndexGroup = styled.div`
    display: flex;
    align-items: center;
    gap: 7px;
    width: ${p => p.$w}px;
    padding-left: ${p => (p.$indent ? 156 : 0)}px;
`;

const Down = styled.span`
    display: flex;
    gap: 6px;
    color: #208018;
`;

const MeterBox = styled.div`
    width: 149px;
`;

const MeterBar = styled.div`
    display: flex;
    height: 8px;
    border: 1px solid #000;
`;

const MeterRed = styled.div`
    flex: 1;
    background: #f40000;
    border-right: 1px solid #000;
`;

const MeterGreen = styled.div`
    flex: 1;
    background: #088008;
`;

const Dashes = styled.div`
    display: flex;
    justify-content: space-between;
    margin-top: 2px;
`;

const Dash = styled.span`
    width: 10px;
    height: 2px;
    background: ${p => p.$c};
`;

const StatusRight = styled.div`
    display: flex;
    align-self: stretch;
    margin-left: auto;
    padding-right: 3px;
`;

const Cell = styled.span`
    display: flex;
    align-items: center;
    justify-content: center;
    gap: 5px;
    width: ${p => p.$w}px;
    background: #f6f4f4;
    border-left: 1px solid #dcdcdc;
`;

const Mini = styled.div`
    position: absolute;
    bottom: 0;
    left: 0;
    display: flex;
    align-items: center;
    gap: 4px;
    width: 160px;
    height: 28px;
    padding-left: 7px;
    background: linear-gradient(90deg, #f0fafc, #cfe4ec 60%, #e8f4f8);
    border: 1px solid #80949c;
    border-radius: 5px 5px 0 0;
`;

const MiniButtons = styled.div`
    display: flex;
    align-self: flex-start;
    margin-left: auto;
    margin-right: 8px;
    border: 1px solid #90a8b4;
    border-top: 0;
    border-radius: 0 0 4px 4px;
`;

const MiniButton = styled.button`
    display: flex;
    align-items: center;
    justify-content: center;
    width: ${p => p.$w}px;
    height: 19px;
    & + & { border-left: 1px solid #90a8b4; }
`;

const Task = styled.footer`
    display: flex;
    height: 34px;
    overflow: hidden;
    background: linear-gradient(#74828e, #34444f 18%, #182934 50%, #0c1c26);
    color: #fff;
`;

const Launch = styled.button`
    display: flex;
    align-items: flex-start;
    justify-content: center;
    width: ${p => p.$w}px;
    padding-top: 3px;
    &:first-child { padding-top: 1px; }
`;

const Window = styled.button`
    display: flex;
    align-items: center;
    gap: 4px;
    width: 159px;
    margin: 1px 3px 0 0;
    padding-left: 9px;
    background: ${p => (p.$active
        ? 'linear-gradient(#a8b0b8, #6c7880 50%, #8c98a4)'
        : 'linear-gradient(90deg, #5c6870, #303c44 60%, #46525a)')};
    border: 1px solid #93a0aa;
    border-bottom: 0;
    border-radius: 3px 3px 0 0;
    ${Launch} + & { margin-left: 2px; }
`;

const Wh = styled.span`
    display: flex;
    align-items: flex-end;
    justify-content: center;
    width: ${p => (p.$small ? 17 : 32)}px;
    background: ${p => (p.$small ? 'none' : '#101818')};
    color: #f8f000;
    font-size: ${p => (p.$small ? 8 : 13)}px;
    font-weight: bold;
    line-height: ${p => (p.$small ? 16 : 28)}px;
    b {
        font-family: "Liberation Serif", serif;
        font-size: ${p => (p.$small ? 20 : 34)}px;
        font-style: italic;
    }
`;

const Tray = styled.div`
    display: flex;
    align-items: center;
    gap: 7px;
    margin-left: auto;
    padding-top: 6px;
`;

const Clock = styled.div`
    display: flex;
    flex-direction: column;
    align-items: center;
    width: 123px;
    padding-top: 2px;
    line-height: 17px;
`;

const Desktop = styled.button`
    width: 14px;
    background: linear-gradient(#90a0ac, #2c3c48);
    border: 1px solid #607080;
`;
